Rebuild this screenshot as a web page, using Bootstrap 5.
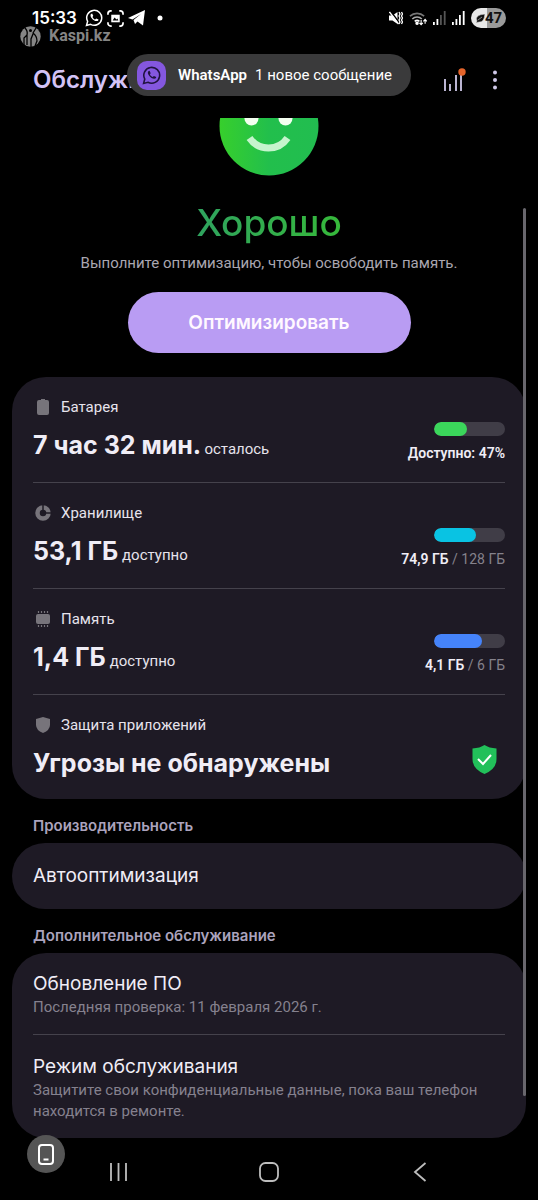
<!DOCTYPE html>
<html lang="ru" data-bs-theme="dark">
<head>
<meta charset="utf-8">
<meta name="viewport" content="width=device-width, initial-scale=1">
<title>Обслуживание устройства</title>
<link href="https://cdn.jsdelivr.net/npm/bootstrap@5.3.0/dist/css/bootstrap.min.css" rel="stylesheet">
<style>
  body { background: #000; color: #f0edf6; font-family: Roboto, sans-serif; font-size: 15px; line-height: 20px; }
  svg { display: block; flex-shrink: 0; }
  .status { height: 36px; padding: 0 32px; color: #fff; }
  .clock { font: 600 17px/20px Inter, sans-serif; }
  .status-right { gap: 6px; }
  .carrier { left: 20px; top: 25px; color: #858585; font: 700 16px/22px Roboto, sans-serif; }
  .battery-pill { width: 35px; height: 20px; color: #111; font: 700 15px/20px Roboto, sans-serif; background: linear-gradient(90deg, #e8e8e8 47%, #9a9a9a 47%); }
  .app-bar { height: 82px; padding: 6px 38px 0 33px; }
  .app-bar h1 { font: 600 24px/32px Inter, sans-serif; color: #d3c3f6; white-space: nowrap; }
  .bare { background: none; border: 0; padding: 0; color: #cfc8e8; }
  .toast-pill { left: 127px; top: 54px; height: 42px; padding: 0 19px 0 10px; background: #3a3a3b; color: #fff; z-index: 2; }
  .toast-icon { width: 29px; height: 29px; border-radius: 10px; background: #8457df; }
  .verdict { margin: 25px 0 0; font: 500 37px/44px Inter, sans-serif; background: linear-gradient(90deg, #2fa35f, #36b93a); -webkit-background-clip: text; background-clip: text; color: transparent; }
  .hint { margin: 8px 0 0; color: #aaa7b1; }
  .optimize { margin: 19px 0 24px; width: 55%; min-width: 283px; height: 61px; border: 0; background: #b99cf3; color: #fff8ff; font: 600 19px/24px Inter, sans-serif; }
  .content { padding: 0 12px; }
  .panel { background: #1e1a25; border-radius: 34px; padding: 0 21px; }
  .panel > * + * { border-top: 1px solid #45424c; }
  .metric { height: 106px; padding-top: 20px; }
  .metric:first-child, .metric:last-child { height: 105px; }
  .metric-name { color: #e6e3ec; }
  .metric-value { font: 700 25px/32px Inter, sans-serif; margin-top: 12px; white-space: nowrap; }
  .metric-value span { font: 400 15px/20px Roboto, sans-serif; color: #e6e3ec; margin-left: -2px; }
  .meter { width: 71px; height: 14px; border-radius: 7px; background: #403d47; margin: 25px 0 7px; }
  .meter .progress-bar { border-radius: 7px; }
  .usage { font-size: 14px; font-weight: 600; }
  .usage span { font-weight: 400; color: #85828c; }
  .bg-battery { background: #3bd65b; } .bg-storage { background: #09c3e3; } .bg-memory { background: #4583fa; }
  .section-title { font: 600 15px/20px Inter, sans-serif; color: #aba3bd; margin: 17px 21px 7px; }
  .entry { font: 400 19px/26px Inter, sans-serif; color: #f0edf6; text-decoration: none; padding: 18px 0 16px; }
  .entry + .entry { padding-top: 19px; }
  .entry-single { padding: 20px 0; }
  .entry small { display: block; font: 400 15px/21px Roboto, sans-serif; color: #85818e; }
  .scroll-thumb { right: 12px; top: 208px; width: 3px; height: 888px; background: #69676d; }
  .nav-row { height: 61px; padding: 7px 109px 0; }
  .float-key { left: 27px; top: 1135px; width: 38px; height: 38px; background: #555; color: #fff; }
</style>
</head>
<body>
<div class="position-relative">
  <header>
    <div class="status d-flex align-items-center justify-content-between">
      <div class="d-flex align-items-center gap-1">
        <span class="clock me-1">15:33</span>
        <svg width="18" height="18" viewBox="0 0 24 24" fill="none" stroke="currentColor" stroke-width="2"><path d="M2 22l1.500-5.500A10 10 0 1 1 7.500 20.500z"/><path d="M8 6.500c-3 3 5 12 9.500 9l.5-1.500-3-1.500-1.500 1.500c-1.500-.5-3-2-3.500-3.500l1-1.500L9.500 6z" fill="currentColor" stroke="none"/></svg>
        <svg width="17" height="17" viewBox="0 0 18 18" fill="none" stroke="currentColor" stroke-width="1.800"><path d="M1 5V4a3 3 0 0 1 3-3h1M13 1h1a3 3 0 0 1 3 3v1M17 13v1a3 3 0 0 1-3 3h-1M5 17H4a3 3 0 0 1-3-3v-1"/><path d="M4.500 5h9v8h-9z" fill="currentColor" stroke="none"/><path d="M6 11l2-3 2 2 1-1 1 2z" fill="#000" stroke="none"/></svg>
        <svg width="17" height="16" viewBox="0 0 17 16" fill="currentColor"><path d="M0 8L17 0l-2 15.500-5.500-4L7 14l-1.500-4L13 4 4.500 9.500z"/></svg>
        <svg class="ms-2" width="6" height="6" viewBox="0 0 6 6"><circle cx="3" cy="3" r="2.500" fill="currentColor"/></svg>
      </div>
      <div class="status-right d-flex align-items-center">
        <svg width="14" height="14" viewBox="0 0 14 14" fill="none" stroke="currentColor"><path d="M0 4.500h3.500L8.500 1v12l-5-3.500H0z" fill="currentColor" stroke="none"/><path d="M1.500 0l9 12" stroke="#000" stroke-width="1.500"/><path d="M.5 1l9 12" stroke-width="1.300"/><path d="M10 1l1 2-1 2 1 2-1 2 1 2-1 2M12.500 1l1 2-1 2 1 2-1 2 1 2-1 2" stroke-width="1.300"/></svg>
        <svg width="18" height="15" viewBox="0 0 19 15" fill="none" stroke="currentColor" stroke-width="1.700"><path d="M1 5a11 11 0 0 1 15 0" stroke="#777"/><path d="M3.500 8a7 7 0 0 1 10 0" stroke="#aaa"/><path d="M6 10.500a4 4 0 0 1 5 0"/><circle cx="8.500" cy="12.500" r="1" fill="currentColor"/><path d="M12.800 9v5m-1.800-2l1.800 2 1.800-2M17 13V8.500m-1.800 2l1.800-2 1.800 2" stroke-width="1.200"/></svg>
        <svg width="13" height="14" viewBox="0 0 13 14" fill="currentColor"><path d="M0 11h1.800v3H0zM3.500 8h1.800v6H3.500z"/><path d="M7 4h1.800v10H7zM10.800 0h1.800v14h-1.800z" fill="#555"/></svg>
        <svg width="13" height="14" viewBox="0 0 13 14" fill="currentColor"><path d="M0 11h1.800v3H0zM3.500 8h1.800v6H3.500zM7 4h1.800v10H7zM10.800 0h1.800v14h-1.800z"/></svg>
        <span class="battery-pill rounded-pill d-flex align-items-center justify-content-center"><svg width="10" height="9" viewBox="0 0 10 9"><path d="M10 0Q9 9 4 8L1 9l1-2Q-1 1 10 0M3 6l4-3" fill="#111" stroke="#ddd" stroke-width=".6"/></svg>47</span>
      </div>
    </div>
    <div class="carrier position-absolute d-flex align-items-center gap-2">
      <svg width="21" height="21" viewBox="0 0 21 21"><circle cx="10.500" cy="10.500" r="10.200" fill="#858585"/><path d="M5 2q3 3 2 7l-3 3v7M7 9v10M16 2l-3 5q4 3 4 8l-2 5M13 8l-2 5v8" fill="none" stroke="#000" stroke-width="1.300"/><circle cx="10.500" cy="4.500" r="1.500"/></svg>
      Kaspi.kz
    </div>
    <div class="app-bar d-flex align-items-center justify-content-between">
      <h1 class="m-0">Обслужи</h1>
      <div class="d-flex align-items-center">
        <button class="bare me-4" aria-label="Статистика"><svg width="24" height="24" viewBox="0 0 24 24" fill="none"><path d="M3 11v12M8 16v7M14 7v16M19 4v19" stroke="currentColor" stroke-width="1.800"/><circle cx="20" cy="4" r="3.700" fill="#e4642b"/></svg></button>
        <button class="bare" aria-label="Ещё"><svg width="10" height="20" viewBox="0 0 10 20" fill="currentColor"><circle cx="5" cy="2.500" r="2"/><circle cx="5" cy="10" r="2"/><circle cx="5" cy="17.500" r="2"/></svg></button>
      </div>
    </div>
    <div class="toast-pill position-absolute rounded-pill d-flex align-items-center">
      <span class="toast-icon d-flex align-items-center justify-content-center me-2"><svg width="19" height="19" viewBox="0 0 24 24" fill="none" stroke="#20133f" stroke-width="2"><path d="M2 22l1.500-5.500A10 10 0 1 1 7.500 20.500z"/><path d="M8 6.500c-3 3 5 12 9.500 9l.5-1.500-3-1.500-1.500 1.500c-1.500-.5-3-2-3.500-3.500l1-1.500L9.500 6z" fill="#20133f" stroke="none"/></svg></span>
      <b class="fw-semibold ms-1 me-2">WhatsApp</b><span>1 новое сообщение</span>
    </div>
  </header>

  <main class="content">
    <div class="d-flex flex-column align-items-center text-center">
      <svg width="100" height="58" viewBox="0 42 100 58"><defs><linearGradient id="face"><stop offset="0" stop-color="#37cf2c"/><stop offset=".5" stop-color="#22bf4c"/><stop offset="1" stop-color="#22bd50"/></linearGradient></defs><circle cx="50" cy="50" r="49.500" fill="url(#face)"/><circle cx="32.500" cy="42.500" r="7" fill="#f3fff0"/><circle cx="66.500" cy="42.500" r="7" fill="#f3fff0"/><path d="M30.500 62a23 23 0 0 0 38 0" fill="none" stroke="#c6f4cd" stroke-width="7"/></svg>
      <h2 class="verdict">Хорошо</h2>
      <p class="hint">Выполните оптимизацию, чтобы освободить память.</p>
      <button class="optimize rounded-pill">Оптимизировать</button>
    </div>

    <section class="panel">
      <div class="metric d-flex justify-content-between">
        <div>
          <div class="metric-name d-flex align-items-center gap-2"><svg width="20" height="20" viewBox="0 0 20 20" fill="#77747b"><path d="M8 2h4v1h2a2 2 0 0 1 2 2v11a2 2 0 0 1-2 2H6a2 2 0 0 1-2-2V5a2 2 0 0 1 2-2h2z"/></svg>Батарея</div>
          <div class="metric-value">7 час 32 мин. <span>осталось</span></div>
        </div>
        <div class="d-flex flex-column align-items-end"><div class="meter progress"><div class="progress-bar bg-battery" style="width:47%"></div></div><div class="usage">Доступно: 47%</div></div>
      </div>
      <div class="metric d-flex justify-content-between">
        <div>
          <div class="metric-name d-flex align-items-center gap-2"><svg width="20" height="20" viewBox="0 0 20 20" fill="none"><circle cx="10" cy="10" r="5.500" stroke="#77747b" stroke-width="4.500"/><path d="M10 10V1M10 10h9" stroke="#1e1a25" stroke-width="1.500"/></svg>Хранилище</div>
          <div class="metric-value">53,1 ГБ <span>доступно</span></div>
        </div>
        <div class="d-flex flex-column align-items-end"><div class="meter progress"><div class="progress-bar bg-storage" style="width:59%"></div></div><div class="usage">74,9 ГБ <span>/ 128 ГБ</span></div></div>
      </div>
      <div class="metric d-flex justify-content-between">
        <div>
          <div class="metric-name d-flex align-items-center gap-2"><svg width="20" height="20" viewBox="0 0 20 20"><rect x="3" y="5" width="14" height="10" rx="2" fill="#77747b"/><path d="M5.500 2v2M8.500 2v2M11.500 2v2M14.500 2v2M5.500 16v2M8.500 16v2M11.500 16v2M14.500 16v2" stroke="#77747b" stroke-width="1.200"/></svg>Память</div>
          <div class="metric-value">1,4 ГБ <span>доступно</span></div>
        </div>
        <div class="d-flex flex-column align-items-end"><div class="meter progress"><div class="progress-bar bg-memory" style="width:68%"></div></div><div class="usage">4,1 ГБ <span>/ 6 ГБ</span></div></div>
      </div>
      <div class="metric d-flex justify-content-between">
        <div>
          <div class="metric-name d-flex align-items-center gap-2"><svg width="20" height="20" viewBox="0 0 20 20" fill="#77747b"><path d="M10 2l7 2v6q0 5-7 8-7-3-7-8V4z"/></svg>Защита приложений</div>
          <div class="metric-value">Угрозы не обнаружены</div>
        </div>
        <svg class="mt-4 me-2" width="25" height="38" viewBox="0 0 25 38"><path d="M12.500 6Q17 9 24.500 9.500V20q0 10-12 15Q.5 30 .5 20V9.500Q8 9 12.500 6" fill="#22c05a"/><path d="M6 20l5 5 8-9" fill="none" stroke="#fff" stroke-width="2"/></svg>
      </div>
    </section>

    <h3 class="section-title">Производительность</h3>
    <section class="panel"><a href="#" class="entry entry-single d-block">Автооптимизация</a></section>

    <h3 class="section-title">Дополнительное обслуживание</h3>
    <section class="panel">
      <a href="#" class="entry d-block">Обновление ПО<small>Последняя проверка: 11 февраля 2026 г.</small></a>
      <a href="#" class="entry d-block">Режим обслуживания<small>Защитите свои конфиденциальные данные, пока ваш телефон находится в ремонте.</small></a>
    </section>
  </main>

  <nav class="nav-row d-flex align-items-center justify-content-between">
    <button class="bare" aria-label="Недавние"><svg width="19" height="20" viewBox="0 0 19 20" stroke="#bdbdbd" stroke-width="1.800"><path d="M2 1v18M9.500 1v18M17 1v18"/></svg></button>
    <button class="bare" aria-label="Домой"><svg width="20" height="20" viewBox="0 0 20 20" fill="none" stroke="#bdbdbd" stroke-width="1.800"><rect x="1" y="1" width="18" height="18" rx="5.500"/></svg></button>
    <button class="bare" aria-label="Назад"><svg width="19" height="20" viewBox="0 0 19 20" fill="none" stroke="#bdbdbd" stroke-width="1.800"><path d="M15.500 1L5 10l10.500 9"/></svg></button>
  </nav>
  <div class="scroll-thumb position-absolute rounded-pill"></div>
  <button class="bare float-key position-absolute rounded-circle d-flex align-items-center justify-content-center" aria-label="Повернуть экран"><svg width="16" height="21" viewBox="0 0 16 21" fill="none" stroke="#fff" stroke-width="2"><rect x="1" y="1" width="14" height="19" rx="3"/><path d="M5.500 15.500h5"/></svg></button>
</div>
<script src="https://cdn.jsdelivr.net/npm/bootstrap@5.3.0/dist/js/bootstrap.bundle.min.js"></script>
</body>
</html>
